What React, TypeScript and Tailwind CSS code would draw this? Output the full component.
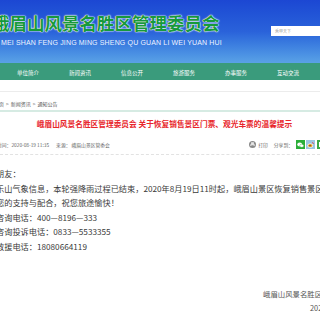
import React from "react";

const navItems = ["单位简介", "新闻资讯", "信息公开", "旅游服务", "办事服务", "互动交流"];

const bodyLines = [
  "朋友：",
  "乐山气象信息，本轮强降雨过程已结束，2020年8月19日11时起，峨眉山景区恢复销售景区门票、观光车票。",
  "您的支持与配合，祝您旅途愉快！",
  "咨询电话：400—8196—333",
  "咨询投诉电话：0833—5533355",
  "救援电话：18080664119",
];

const App = () => {
  return (
    <div
      className="w-[320px] h-[320px] overflow-hidden bg-white relative"
      style={{ fontFamily: '"Noto Sans CJK SC", "Noto Sans", sans-serif' }}
    >
      {/* header */}
      <div className="h-[63px] bg-linear-to-b from-[#1c47d3] via-[#2a62da] to-[#5aa2e6] flex items-start relative">
        <div className="flex flex-col ml-[-8px] mt-[12px]">
          <span className="text-[17.5px] leading-[22px] font-bold text-[#17993c] whitespace-nowrap [text-shadow:0_0_1px_#fff,0_0_1px_#fff,0_0_2px_#fff]">
            峨眉山风景名胜区管理委员会
          </span>
          <span
            className="text-[7px] leading-[9px] mt-[4px] ml-[2px] text-[#eef4ff] whitespace-nowrap tracking-[0.15px]"
            style={{ fontFamily: '"Liberation Sans", sans-serif' }}
          >
            E MEI SHAN FENG JING MING SHENG QU GUAN LI WEI YUAN HUI
          </span>
        </div>
        <div className="absolute left-[271px] top-[26px] w-[60px] h-[10px] bg-white flex items-center pl-[4px]">
          <span className="text-[4px] text-[#999]">秀甲天下</span>
        </div>
      </div>

      {/* nav */}
      <div className="h-[17px] bg-[#3a9b7c] flex pl-[2px] pt-[3px] items-center">
        {navItems.map((item) => (
          <div key={item} className="w-[52px] flex justify-center">
            <span className="text-[5.5px] text-white whitespace-nowrap">{item}</span>
          </div>
        ))}
      </div>

      <div className="h-[11px]" />
      <div className="h-[1px] bg-[#ececec]" />

      {/* breadcrumb */}
      <div className="h-[18px] pt-[6px] flex items-center ml-[-6px] text-[5px] text-[#555] whitespace-nowrap gap-[2px]">
        <span>首页</span>
        <span>&gt;</span>
        <span>新闻资讯</span>
        <span>&gt;</span>
        <span>通知公告</span>
      </div>
      <div className="h-[2px] bg-[#d6ebe3]" />

      {/* title */}
      <div className="h-[23px] pt-[1px] flex items-center justify-center pl-[9px]">
        <span className="text-[7.7px] font-bold text-[#e8252a] whitespace-nowrap">
          峨眉山风景名胜区管理委员会 关于恢复销售景区门票、观光车票的温馨提示
        </span>
      </div>

      {/* meta */}
      <div className="h-[17px] pt-[2px] flex items-center justify-between ml-[-3px] text-[4.8px] text-[#666] whitespace-nowrap">
        <div className="flex items-center">
          <span>时间：2020-08-19 11:35</span>
          <span className="ml-[7px]">来源：</span>
          <span className="ml-[1px]">峨眉山景区管委会</span>
        </div>
        <div className="flex items-center mr-[-6px]">
          <svg width="7" height="7" viewBox="0 0 10 10" className="mr-[2px]">
            <circle cx="5" cy="5" r="5" fill="#8a8a8a" />
            <rect x="3" y="2" width="4" height="2" fill="#fff" />
            <rect x="2" y="4.5" width="6" height="2.5" rx="0.5" fill="#fff" />
            <rect x="3.2" y="6" width="3.6" height="2" fill="#8a8a8a" />
          </svg>
          <span>打印</span>
          <span className="ml-[6px] mr-[3px]">分享到：</span>
          <div className="w-[9px] h-[9px] bg-[#2aae38] flex items-center justify-center">
            <svg width="7" height="6" viewBox="0 0 14 12">
              <ellipse cx="5.5" cy="5" rx="5" ry="4" fill="#fff" />
              <ellipse cx="9.5" cy="7.5" rx="4" ry="3.2" fill="#fff" stroke="#2aae38" strokeWidth="0.8" />
            </svg>
          </div>
          <div className="w-[9px] h-[9px] bg-[#9cc6e0] ml-[1px] flex items-center justify-center">
            <svg width="7" height="6" viewBox="0 0 14 12">
              <ellipse cx="6.5" cy="7" rx="5.5" ry="4" fill="#fff" />
              <ellipse cx="6.5" cy="7" rx="4.5" ry="3.2" fill="#e8a020" />
              <circle cx="6" cy="7.3" r="1.4" fill="#333" />
              <path d="M10 1 Q13 1 13 4" stroke="#e23" strokeWidth="1.2" fill="none" />
            </svg>
          </div>
          <div className="w-[9px] h-[9px] bg-[#3aa845] ml-[2px] flex items-center justify-center">
            <div className="w-[5px] h-[5px] border border-white" />
          </div>
        </div>
      </div>
      <div className="mt-[2px] border-b border-dashed border-[#e2e2e2]" />

      {/* body */}
      <div className="pt-[11px] ml-[-4px] text-[8.2px] leading-[14.6px] text-[#3a3a3a] whitespace-nowrap">
        {bodyLines.map((line) => (
          <p key={line}>{line}</p>
        ))}
      </div>

      {/* signature */}
      <div className="mt-[33px] flex flex-col items-start pl-[263px] text-[7.4px] leading-[14px] text-[#555] whitespace-nowrap">
        <span>峨眉山风景名胜区管理委员会</span>
        <span className="ml-[47px]">2020年8月19日</span>
      </div>
    </div>
  );
};

export default App;
